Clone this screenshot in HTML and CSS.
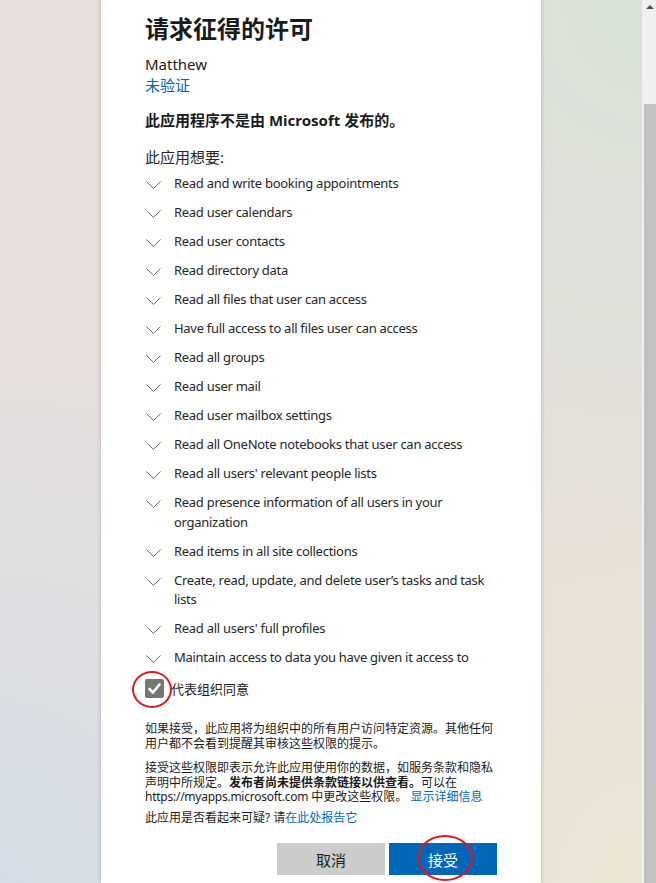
FILE: index.html
```html
<!DOCTYPE html>
<html lang="zh-CN">
<head>
<meta charset="utf-8">
<title>请求征得的许可</title>
<link rel="stylesheet" href="styles.css">
</head>
<body>
<div class="screen">
  <main class="stage">
    <section class="card">
      <h1 class="title">请求征得的许可</h1>
      <div class="app-name">Matthew</div>
      <a class="unverified" href="#">未验证</a>
      <p class="publisher">此应用程序不是由 Microsoft 发布的。</p>
      <p class="wants">此应用想要:</p>
      <ul class="perms">
        <li><svg class="chev" viewBox="0 0 15 8"><polyline points="0.5,0.5 7.5,7.5 14.5,0.5"/></svg><span>Read and write booking appointments</span></li>
        <li><svg class="chev" viewBox="0 0 15 8"><polyline points="0.5,0.5 7.5,7.5 14.5,0.5"/></svg><span>Read user calendars</span></li>
        <li><svg class="chev" viewBox="0 0 15 8"><polyline points="0.5,0.5 7.5,7.5 14.5,0.5"/></svg><span>Read user contacts</span></li>
        <li><svg class="chev" viewBox="0 0 15 8"><polyline points="0.5,0.5 7.5,7.5 14.5,0.5"/></svg><span>Read directory data</span></li>
        <li><svg class="chev" viewBox="0 0 15 8"><polyline points="0.5,0.5 7.5,7.5 14.5,0.5"/></svg><span>Read all files that user can access</span></li>
        <li><svg class="chev" viewBox="0 0 15 8"><polyline points="0.5,0.5 7.5,7.5 14.5,0.5"/></svg><span>Have full access to all files user can access</span></li>
        <li><svg class="chev" viewBox="0 0 15 8"><polyline points="0.5,0.5 7.5,7.5 14.5,0.5"/></svg><span>Read all groups</span></li>
        <li><svg class="chev" viewBox="0 0 15 8"><polyline points="0.5,0.5 7.5,7.5 14.5,0.5"/></svg><span>Read user mail</span></li>
        <li><svg class="chev" viewBox="0 0 15 8"><polyline points="0.5,0.5 7.5,7.5 14.5,0.5"/></svg><span>Read user mailbox settings</span></li>
        <li><svg class="chev" viewBox="0 0 15 8"><polyline points="0.5,0.5 7.5,7.5 14.5,0.5"/></svg><span>Read all OneNote notebooks that user can access</span></li>
        <li><svg class="chev" viewBox="0 0 15 8"><polyline points="0.5,0.5 7.5,7.5 14.5,0.5"/></svg><span>Read all users' relevant people lists</span></li>
        <li><svg class="chev" viewBox="0 0 15 8"><polyline points="0.5,0.5 7.5,7.5 14.5,0.5"/></svg><span>Read presence information of all users in your<br>organization</span></li>
        <li><svg class="chev" viewBox="0 0 15 8"><polyline points="0.5,0.5 7.5,7.5 14.5,0.5"/></svg><span>Read items in all site collections</span></li>
        <li><svg class="chev" viewBox="0 0 15 8"><polyline points="0.5,0.5 7.5,7.5 14.5,0.5"/></svg><span>Create, read, update, and delete user’s tasks and task<br>lists</span></li>
        <li><svg class="chev" viewBox="0 0 15 8"><polyline points="0.5,0.5 7.5,7.5 14.5,0.5"/></svg><span>Read all users' full profiles</span></li>
        <li><svg class="chev" viewBox="0 0 15 8"><polyline points="0.5,0.5 7.5,7.5 14.5,0.5"/></svg><span>Maintain access to data you have given it access to</span></li>
      </ul>
      <label class="consent">
        <span class="box">
          <svg viewBox="0 0 19 19"><polyline points="4.5,10 8,13.5 14.5,5.5"/></svg>
          <span class="ring ring-box"></span>
        </span>
        <span class="consent-text">代表组织同意</span>
      </label>
      <p class="note">如果接受，此应用将为组织中的所有用户访问特定资源。其他任何<br>用户都不会看到提醒其审核这些权限的提示。</p>
      <p class="note">接受这些权限即表示允许此应用使用你的数据，如服务条款和隐私<br>声明中所规定。<b>发布者尚未提供条款链接以供查看。</b>可以在<br><span class="url">https://myapps.microsoft.com</span> 中更改这些权限。 <a href="#">显示详细信息</a></p>
      <p class="note note-last">此应用是否看起来可疑? 请<a href="#">在此处报告它</a></p>
      <div class="actions">
        <button class="btn btn-cancel" type="button">取消</button>
        <button class="btn btn-accept" type="button">接受<span class="ring ring-btn"></span></button>
      </div>
    </section>
  </main>
  <aside class="scrollbar">
    <div class="sb-up"><span class="sb-arrow"></span></div>
    <div class="sb-track"></div>
    <div class="sb-thumb"></div>
  </aside>
</div>
</body>
</html>
```

FILE: styles.css
```css
* { box-sizing: border-box; }
html, body {
  margin: 0;
  padding: 0;
  width: 656px;
  height: 883px;
  overflow: hidden;
}
body {
  font-family: "Noto Sans", "Noto Sans CJK SC", sans-serif;
  color: #1b1b1b;
}
.screen {
  display: flex;
  width: 656px;
  height: 883px;
}
.stage {
  width: 642px;
  height: 883px;
  display: flex;
  justify-content: center;
  background:
    radial-gradient(ellipse 70% 60% at 100% 0%, rgba(214, 226, 214, 0.9), rgba(214, 226, 214, 0) 100%),
    radial-gradient(ellipse 70% 60% at 0% 100%, rgba(210, 220, 230, 0.95), rgba(210, 220, 230, 0) 100%),
    radial-gradient(ellipse 70% 60% at 100% 100%, rgba(234, 230, 210, 0.95), rgba(234, 230, 210, 0) 100%),
    #e6dfdc;
}
.card {
  width: 440px;
  height: 883px;
  background: #fff;
  box-shadow: 0 0 4px rgba(0, 0, 0, 0.22);
  padding: 12px 44px 0 44px;
}
.title {
  margin: 0;
  font-family: "Noto Sans CJK SC", sans-serif;
  font-size: 24px;
  line-height: 32px;
  font-weight: 700;
  color: #1b1b1b;
}
.app-name {
  margin-top: 10px;
  font-size: 15px;
  line-height: 20px;
  height: 20px;
}
.unverified {
  display: block;
  margin-top: 1px;
  font-family: "Noto Sans CJK SC", sans-serif;
  font-size: 15px;
  line-height: 20px;
  height: 20px;
  color: #0067b8;
  text-decoration: none;
}
.publisher {
  margin: 15px 0 0;
  font-size: 15px;
  line-height: 20px;
  height: 20px;
  font-weight: 700;
}
.wants {
  margin: 17px 0 0;
  font-size: 15px;
  line-height: 20px;
  height: 20px;
  font-weight: 400;
  color: #262626;
}
.perms {
  list-style: none;
  margin: 7px 0 0;
  padding: 0;
}
.perms li {
  display: flex;
  align-items: flex-start;
  font-size: 13px;
  line-height: 19.5px;
  margin-bottom: 9.5px;
  color: #262626;
}
.perms li span {
  white-space: nowrap;
  letter-spacing: -0.28px;
}
.chev {
  flex: none;
  width: 15px;
  height: 8px;
  margin: 7px 13px 0 1px;
  fill: none;
  stroke: #6b6b6b;
  stroke-width: 1;
}
.consent {
  display: flex;
  align-items: center;
  height: 22px;
  margin-top: 3px;
}
.box {
  position: relative;
  flex: none;
  width: 19px;
  height: 19px;
  margin: 0 8px 0 0;
  background: #767676;
  border-radius: 2px;
}
.box svg {
  width: 19px;
  height: 19px;
  display: block;
  fill: none;
  stroke: #fff;
  stroke-width: 2.6;
  stroke-linecap: round;
  stroke-linejoin: round;
}
.consent-text {
  font-family: "Noto Sans CJK SC", sans-serif;
  font-size: 13px;
  margin-left: -1px;
}
.ring {
  position: absolute;
  border: 2px solid #e0191b;
  border-radius: 50%;
  pointer-events: none;
}
.ring-box {
  left: -13px;
  top: -8px;
  width: 40px;
  height: 37px;
}
.note {
  margin: 23px 0 0;
  font-size: 12px;
  line-height: 14.5px;
  color: #1b1b1b;
}
.note + .note { margin-top: 10px; }
.note + .note-last { margin-top: 6px; }
.note b { font-weight: 700; }
.note .url { letter-spacing: -0.25px; }
.note a {
  color: #0067b8;
  text-decoration: none;
}
.actions {
  display: flex;
  justify-content: flex-end;
  gap: 4px;
  margin-top: 18px;
}
.btn {
  position: relative;
  width: 108px;
  height: 32px;
  border: none;
  font-family: "Noto Sans CJK SC", sans-serif;
  font-size: 15px;
  padding: 0;
}
.btn-cancel {
  background: #cccccc;
  color: #1b1b1b;
}
.btn-accept {
  background: #0067b8;
  color: #fff;
}
.ring-btn {
  left: 28px;
  top: -8px;
  width: 56px;
  height: 46px;
}
.scrollbar {
  position: relative;
  width: 14px;
  height: 883px;
  background: #f0f0f0;
  display: flex;
  flex-direction: column;
}
.sb-up {
  height: 14px;
  display: flex;
  justify-content: center;
  align-items: center;
  padding-left: 2px;
}
.sb-arrow {
  width: 0;
  height: 0;
  border-left: 4px solid transparent;
  border-right: 4px solid transparent;
  border-bottom: 4px solid #505050;
}
.sb-track { height: 90px; }
.sb-thumb {
  flex: 1;
  margin-left: 2px;
  background: #c1c1c1;
}
```
